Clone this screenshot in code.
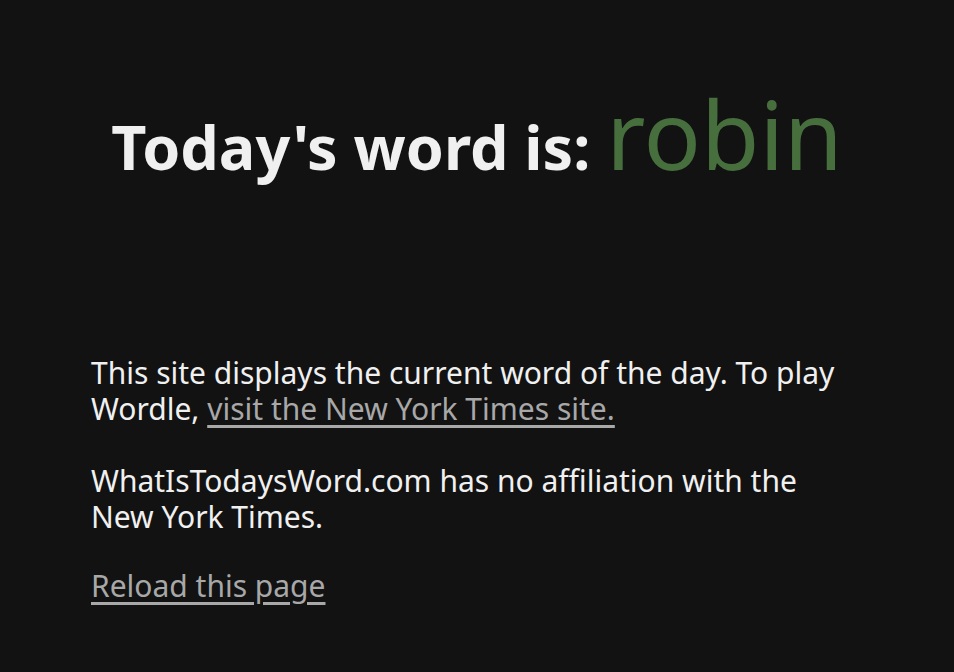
export default function App() {
  return (
    <div
      className="min-h-[672px] bg-[#121212] text-[#f0f0f0]"
      style={{ fontFamily: '"Trebuchet MS", "Noto Sans", Lato, sans-serif' }}
    >
      <div className="mx-auto w-[772px] pt-[78px]">
        {/* Heading */}
        <h1 className="text-center text-[61px] font-bold leading-[110px] whitespace-nowrap">
          Today's word is:{' '}
          <span className="text-[95px] font-normal text-[#476f3d]">robin</span>
        </h1>

        {/* Body */}
        <div className="mt-[153px] text-[30px] leading-[36px]">
          <p>
            This site displays the current word of the day. To play Wordle,{' '}
            <a href="#" className="text-[#a8a8a8] underline underline-offset-[5px]">
              visit the New York Times site.
            </a>
          </p>
          <p className="mt-[36px]">
            WhatIsTodaysWord.com has no affiliation with the New York Times.
          </p>
          <p className="mt-[33px]">
            <a href="#" className="text-[#a8a8a8] underline underline-offset-[5px]">
              Reload this page
            </a>
          </p>
        </div>
      </div>
    </div>
  )
}
